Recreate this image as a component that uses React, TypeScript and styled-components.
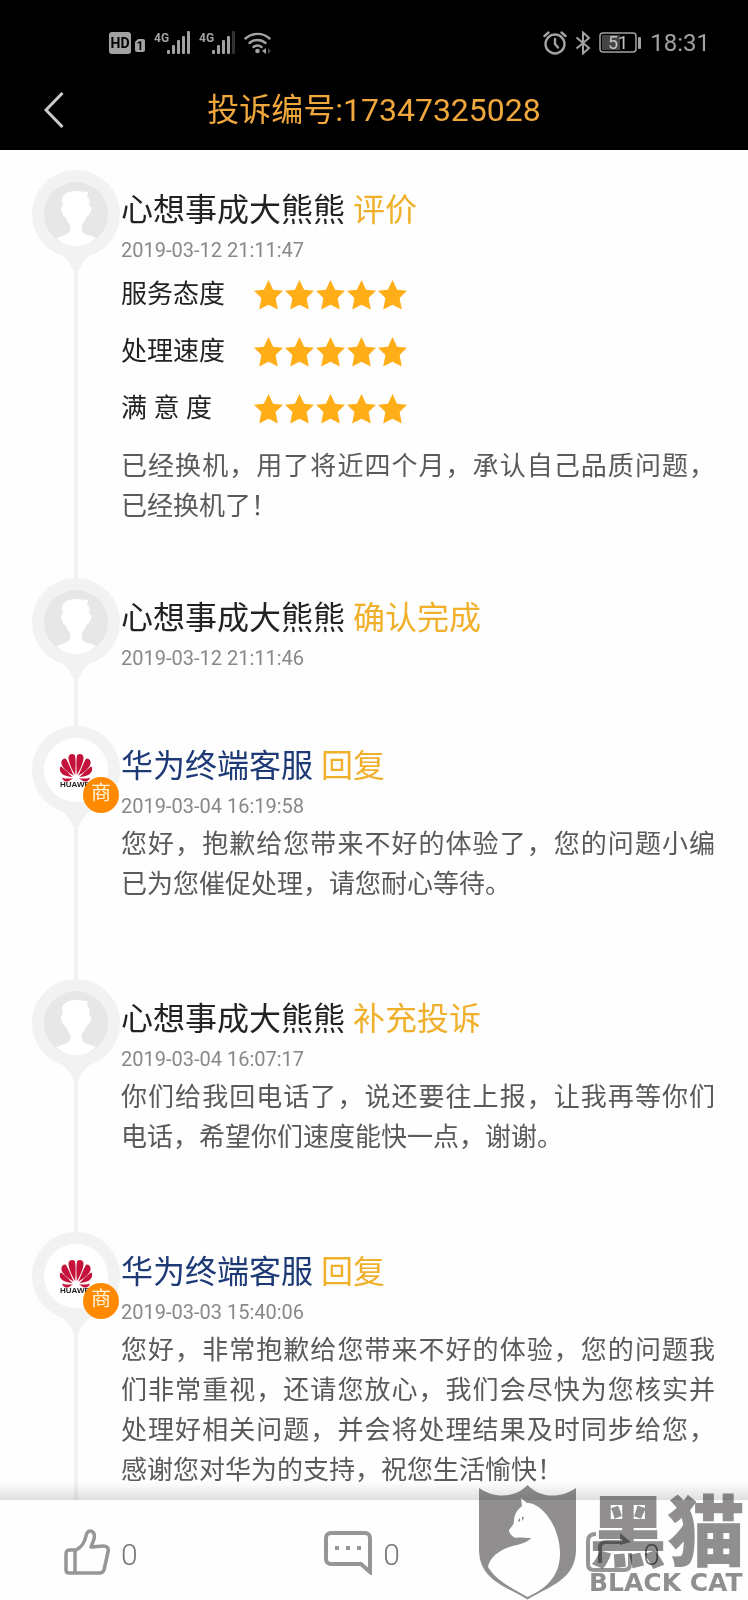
import styled, { createGlobalStyle } from "styled-components";

const GlobalStyle = createGlobalStyle`
    * {
        box-sizing: border-box;
    }
    body {
        margin: 0;
        background-color: #fefefe;
        font-family: Roboto, "Noto Sans CJK SC", sans-serif;
    }
    h1, h2, p, ol, dl, dd {
        margin: 0;
        padding: 0;
        font-weight: 400;
    }
    button {
        border: 0;
        padding: 0;
        background: none;
        font: inherit;
        color: inherit;
        cursor: pointer;
    }
`;

const Wrapper = styled.div`
    height: 100vh;
    display: flex;
    flex-direction: column;
    overflow: hidden;
`;

const Header = styled.header`
    background-color: #000;
`;

const StatusBar = styled.div`
    display: flex;
    align-items: center;
    justify-content: space-between;
    height: 70px;
    padding: 16px 38px 0 109px;
    color: #a2a2a2;
`;

const StatusGroup = styled.div`
    display: flex;
    align-items: center;
    gap: 8px;
`;

const Clock = styled.time`
    font-size: 24px;
    line-height: 28px;
`;

const NavBar = styled.div`
    display: grid;
    grid-template-columns: 80px 1fr 80px;
    align-items: center;
    height: 80px;
`;

const BackButton = styled.button`
    display: flex;
    justify-content: flex-end;
    height: 80px;
    padding-right: 16px;
    align-items: center;
`;

const PageTitle = styled.h1`
    font-size: 32px;
    line-height: 48px;
    text-align: center;
    color: #f0a83c;
`;

const Main = styled.main`
    flex: 1;
    min-height: 0;
    overflow-y: auto;
    scrollbar-width: none;
`;

const Timeline = styled.ol`
    list-style: none;
    padding: 20px 33px 0 32px;
`;

const Entry = styled.li`
    display: grid;
    grid-template-columns: 88px 1fr;
    column-gap: 1px;
`;

const Track = styled.div`
    display: flex;
    flex-direction: column;
    align-items: center;
    svg {
        display: block;
    }
`;

const PinBox = styled.div`
    position: relative;
`;

const TrackLine = styled.div`
    flex: 1;
    width: 4px;
    background-color: #f1f1f1;
`;

const MerchantBadge = styled.span`
    position: absolute;
    top: 51px;
    right: 1px;
    width: 36px;
    height: 36px;
    border-radius: 50%;
    background-color: #ff8a00;
    color: #fff5dc;
    font-size: 20px;
    line-height: 32px;
    text-align: center;
`;

const Content = styled.div`
    padding: 16px 0 52px;
`;

const EntryTitle = styled.h2`
    font-size: 32px;
    line-height: 48px;
`;

const Author = styled.span<{ $merchant: boolean }>`
    color: ${(props) => (props.$merchant ? "#1d3a76" : "#222")};
`;

const Action = styled.span`
    color: #f0b02c;
`;

const Posted = styled.time`
    display: block;
    font-size: 20px;
    line-height: 32px;
    color: #888;
`;

const Ratings = styled.dl`
    padding-bottom: 7px;
`;

const RatingRow = styled.div`
    display: grid;
    grid-template-columns: 133px auto;
    align-items: center;
    height: 57px;
    font-size: 26px;
    color: #222;
`;

const RatingLabel = styled.dt`
    padding-bottom: 2px;
    line-height: 36px;
`;

const Stars = styled.dd`
    display: flex;
    gap: 2px;
`;

const Message = styled.p<{ $spaced: boolean }>`
    margin-bottom: ${(props) => (props.$spaced ? 23 : 0)}px;
    padding-top: 2px;
    font-size: 26px;
    line-height: 40px;
    text-align: justify;
    color: #5a5a5a;
`;

const Footer = styled.footer`
    position: relative;
    height: 100px;
    background-color: #fefefe;
    &::before {
        content: "";
        position: absolute;
        left: 0;
        right: 0;
        bottom: 100%;
        height: 18px;
        background: linear-gradient(rgba(0, 0, 0, 0), rgba(0, 0, 0, 0.12));
    }
`;

const Actions = styled.div`
    display: flex;
    justify-content: space-between;
    padding: 24px 88px 0 64px;
`;

const ActionButton = styled.button`
    display: flex;
    align-items: center;
    gap: 11px;
    color: #969696;
    font-size: 30px;
    font-weight: 300;
    line-height: 50px;
`;

const Count = styled.span`
    padding-top: 6px;
    color: #777;
`;

const Watermark = styled.div`
    position: absolute;
    right: 0;
    bottom: 0;
    display: flex;
    gap: 13px;
    color: #918f90;
    mix-blend-mode: multiply;
    pointer-events: none;
`;

const WatermarkText = styled.div`
    display: flex;
    flex-direction: column;
    width: 159px;
    white-space: nowrap;
`;

const WatermarkName = styled.span`
    font-family: "Noto Sans CJK SC", sans-serif;
    font-size: 78px;
    font-weight: 900;
    line-height: 84px;
`;

const WatermarkLatin = styled.span`
    font-family: "DejaVu Sans", sans-serif;
    font-size: 25px;
    font-weight: 700;
    line-height: 28px;
`;

interface IEntry {
    id: number;
    author: string;
    merchant: boolean;
    action: string;
    time: string;
    ratings?: { label: string; score: number }[];
    message?: string;
}

const entries: IEntry[] = [
    {
        id: 5,
        author: "心想事成大熊熊",
        merchant: false,
        action: "评价",
        time: "2019-03-12 21:11:47",
        ratings: [
            { label: "服务态度", score: 5 },
            { label: "处理速度", score: 5 },
            { label: "满 意 度", score: 5 },
        ],
        message: "已经换机，用了将近四个月，承认自己品质问题，已经换机了！",
    },
    {
        id: 4,
        author: "心想事成大熊熊",
        merchant: false,
        action: "确认完成",
        time: "2019-03-12 21:11:46",
    },
    {
        id: 3,
        author: "华为终端客服",
        merchant: true,
        action: "回复",
        time: "2019-03-04 16:19:58",
        message:
            "您好，抱歉给您带来不好的体验了，您的问题小编已为您催促处理，请您耐心等待。",
    },
    {
        id: 2,
        author: "心想事成大熊熊",
        merchant: false,
        action: "补充投诉",
        time: "2019-03-04 16:07:17",
        message:
            "你们给我回电话了，说还要往上报，让我再等你们电话，希望你们速度能快一点，谢谢。",
    },
    {
        id: 1,
        author: "华为终端客服",
        merchant: true,
        action: "回复",
        time: "2019-03-03 15:40:06",
        message:
            "您好，非常抱歉给您带来不好的体验，您的问题我们非常重视，还请您放心，我们会尽快为您核实并处理好相关问题，并会将处理结果及时同步给您，感谢您对华为的支持，祝您生活愉快！",
    },
];

function HdIcon() {
    return (
        <svg width="37" height="24" viewBox="0 0 37 24">
            <rect x="0" y="1" width="22" height="22" rx="3" fill="currentColor" />
            <text
                x="11"
                y="17"
                fontSize="14"
                fontWeight="700"
                textAnchor="middle"
                fill="#000"
            >
                HD
            </text>
            <path
                d="M29 8h5a2 2 0 0 1 2 2v9a2 2 0 0 1-2 2h-6a2 2 0 0 1-2-2v-8z"
                fill="currentColor"
            />
            <text
                x="31"
                y="19"
                fontSize="12"
                fontWeight="700"
                textAnchor="middle"
                fill="#000"
            >
                1
            </text>
        </svg>
    );
}

function SignalIcon({ bars }: { bars: number }) {
    return (
        <svg width="37" height="24" viewBox="0 0 37 24">
            <text
                x="0"
                y="11"
                fontSize="12"
                fontWeight="700"
                fill="currentColor"
            >
                4G
            </text>
            {[4, 9, 14, 18, 23].map((height, i) => (
                <rect
                    key={height}
                    x={13 + i * 5}
                    y={23 - height}
                    width="3"
                    height={height}
                    rx="1"
                    fill={i < bars ? "currentColor" : "#333"}
                />
            ))}
        </svg>
    );
}

function WifiIcon() {
    return (
        <svg width="28" height="24" viewBox="0 0 28 24" fill="none">
            <g stroke="currentColor" strokeWidth="2.4" strokeLinecap="round">
                <path d="M1.5 7.5a18 18 0 0 1 24 0" />
                <path d="M5.5 12a12 12 0 0 1 16 0" />
                <path d="M9.5 16a6.5 6.5 0 0 1 8 0" />
            </g>
            <circle cx="13.5" cy="20" r="2.3" fill="currentColor" />
            <path d="M22 17v6l-4-3z" fill="currentColor" />
            <path d="M24 17v6l3-3z" fill="#444" />
        </svg>
    );
}

function AlarmIcon() {
    return (
        <svg
            width="24"
            height="24"
            viewBox="0 0 24 24"
            fill="none"
            stroke="currentColor"
            strokeWidth="2.4"
            strokeLinecap="round"
        >
            <circle cx="12" cy="13" r="9.5" />
            <path d="M12 8v5l3 3.5M1.5 5l4-3.5M22.5 5l-4-3.5" />
        </svg>
    );
}

function BluetoothIcon() {
    return (
        <svg
            width="16"
            height="24"
            viewBox="0 0 16 24"
            fill="none"
            stroke="currentColor"
            strokeWidth="2"
        >
            <path d="M1.5 6.5L14 17l-6 5.5v-21L14 7 1.5 17.5" />
        </svg>
    );
}

function BatteryIcon() {
    return (
        <svg width="43" height="22" viewBox="0 0 43 22">
            <rect
                x="1"
                y="1"
                width="36"
                height="19"
                rx="3"
                fill="none"
                stroke="currentColor"
                strokeWidth="1.5"
            />
            <rect x="3" y="3" width="18" height="15" fill="#444" />
            <text
                x="19"
                y="17"
                fontSize="18"
                textAnchor="middle"
                fill="#c4c4c4"
            >
                51
            </text>
            <rect x="39" y="5" width="3" height="12" rx="1" fill="currentColor" />
        </svg>
    );
}

function StarIcon() {
    return (
        <svg width="29" height="30" viewBox="0 0 29 30">
            <path
                d="M14.5 0l4.6 9.8 9.9 1-7.4 7.2 2.2 11.4-9.3-4.6-9.3 4.6 2.2-11.4L0 10.800l9.900-1z"
                fill="#ffae18"
            />
        </svg>
    );
}

function Pin({ merchant }: { merchant: boolean }) {
    return (
        <svg width="88" height="106" viewBox="0 0 88 106">
            <path d="M29 84c6 5 10 11 13 18v4h4v-4c3-7 7-13 13-18z" fill="#f2f2f2" />
            <circle cx="44" cy="44" r="44" fill="#f2f2f2" />
            {merchant ? (
                <>
                    <circle cx="44" cy="44" r="32" fill="#fff" />
                    <g fill="#c4123a">
                        {/* each petal is mirrored around the logo's middle */}
                        {[1, -1].map((side) => (
                            <g
                                key={side}
                                transform={`translate(44 0) scale(${side} 1)`}
                            >
                                <path d="M.8 49C.2 40 .2 32 1.2 29c3-2 6.500-.5 6.300 3C7.300 37 4 44 .8 49z" />
                                <path d="M2.200 49.800C5 44 8.500 34 10.500 32.500c3.500 0 4.800 3 3.800 6C13 43 6 47.500 2.200 49.800z" />
                                <path d="M3.500 51C7 48 12.500 41.500 15.500 40.500c1.500 3 .2 6-2.500 8-2.500 1.600-6.500 2.300-9.500 2.500z" />
                                <path d="M3 52.400c4 .3 9 .1 11-.7-1.200 3.500-4.500 4.500-6.500 3.500z" />
                            </g>
                        ))}
                    </g>
                    <text
                        x="44"
                        y="61"
                        fontFamily="Liberation Sans, sans-serif"
                        fontSize="8"
                        fontWeight="700"
                        textAnchor="middle"
                        fill="#222"
                    >
                        HUAWEI
                    </text>
                </>
            ) : (
                <>
                    <circle cx="44" cy="44" r="32" fill="#e7e7e7" />
                    <path
                        d="M30 30c0-5 6-9 13-9 5 0 8 1 13 1l-1 4c3 3 3 6 2 10 3 0 3 4 1 7-1 3-3 3-4 5-1 3-3 5-4 7-1 5 0 8 5 10 4 1 7 2 9 3-5 5-12 8-20 8s-15-3-20-8c3-1 6-2 9-3 5-2 6-5 5-10-2-2-3-4-4-7-2-2-3-2-4-5-1-4-2-7 1-7 0-3-1-4-1-6z"
                        fill="#fff"
                    />
                </>
            )}
        </svg>
    );
}

function LikeIcon() {
    return (
        <svg
            width="46"
            height="46"
            viewBox="0 0 46 46"
            fill="none"
            stroke="currentColor"
            strokeWidth="3.5"
            strokeLinejoin="round"
        >
            <path d="M12 21c6-3 9-9 10-14 1-4 2-5 4-5 4 0 5 4 4 8l-3 8c3 0 9-1 12-1 4 0 6 2 5 6l-4 18c-1 2-2 3-4 3H5c-2 0-3-1-3-3V25c0-3 1-4 4-4z" />
            <path d="M11 21v23" />
        </svg>
    );
}

function CommentIcon() {
    return (
        <svg
            width="48"
            height="46"
            viewBox="0 0 48 46"
            fill="none"
            stroke="currentColor"
            strokeWidth="4"
        >
            <path d="M7 4h34c3 0 5 2 5 5v34l-9-8H7c-3 0-5-2-5-5V9c0-3 2-5 5-5z" />
            <path d="M11 19h4M22 19h4M33 19h4" />
        </svg>
    );
}

function ShareIcon() {
    return (
        <svg
            width="46"
            height="46"
            viewBox="0 0 46 46"
            fill="none"
            stroke="currentColor"
            strokeWidth="4"
        >
            <path d="M10 5C5 5 2 7 2 12v23c0 4 2 6 6 6h30c4 0 6-2 6-6V24" />
            <path d="M14 34V19c0-4 2-6 6-6h18" />
            <path d="M34 4l11 9-11 3z" fill="currentColor" stroke="none" />
        </svg>
    );
}

function ShieldLogo() {
    return (
        <svg width="97" height="115" viewBox="0 0 97 115">
            <path
                d="M0 3c16 11 36 10 48.500-3C61 13 81 14 97 3v61c0 30-24 36-48.500 50.500C24 100 0 94 0 64z"
                fill="currentColor"
            />
            <path
                d="M42 13l6 5c2 0 4 0 6 1 18 8 27 32 27 49 0 20-10 34-32.500 44C30 102 16 94 9 82c2-11 14-19 29-22 7-2 12-4 14-7-6 0-11-1-15 0-4-1-7-5-7-8 2-3 5-5 5-9 0-7 4-12 8-15z"
                fill="#fff"
            />
            <path d="M39 36c1-4 4-5 6-4-1 4-3 6-6 4z" fill="currentColor" />
            <path d="M42 32v5" stroke="#fff" strokeWidth="2" />
        </svg>
    );
}

function App() {
    return (
        <Wrapper lang="zh-CN">
            <GlobalStyle />
            <Header>
                <StatusBar>
                    <StatusGroup>
                        <HdIcon />
                        <SignalIcon bars={5} />
                        <SignalIcon bars={4} />
                        <WifiIcon />
                    </StatusGroup>
                    <StatusGroup>
                        <AlarmIcon />
                        <BluetoothIcon />
                        <BatteryIcon />
                        <Clock>18:31</Clock>
                    </StatusGroup>
                </StatusBar>
                <NavBar>
                    <BackButton aria-label="返回">
                        <svg width="20" height="36" viewBox="0 0 20 36">
                            <path
                                d="M18.5 1L2 18l16.5 17"
                                fill="none"
                                stroke="#ccc"
                                strokeWidth="3"
                            />
                        </svg>
                    </BackButton>
                    <PageTitle>投诉编号:17347325028</PageTitle>
                </NavBar>
            </Header>

            <Main>
                <Timeline>
                    {entries.map((entry) => (
                        <Entry key={entry.id}>
                            <Track>
                                <PinBox>
                                    <Pin merchant={entry.merchant} />
                                    {entry.merchant && (
                                        <MerchantBadge>商</MerchantBadge>
                                    )}
                                </PinBox>
                                <TrackLine />
                            </Track>
                            <Content>
                                <EntryTitle>
                                    <Author $merchant={entry.merchant}>
                                        {entry.author}
                                    </Author>{" "}
                                    <Action>{entry.action}</Action>
                                </EntryTitle>
                                <Posted>{entry.time}</Posted>
                                {entry.ratings && (
                                    <Ratings>
                                        {entry.ratings.map((rating) => (
                                            <RatingRow key={rating.label}>
                                                <RatingLabel>
                                                    {rating.label}
                                                </RatingLabel>
                                                <Stars>
                                                    {Array.from(
                                                        { length: rating.score },
                                                        (_, i) => (
                                                            <StarIcon key={i} />
                                                        )
                                                    )}
                                                </Stars>
                                            </RatingRow>
                                        ))}
                                    </Ratings>
                                )}
                                {entry.message && (
                                    <Message $spaced={!entry.ratings}>
                                        {entry.message}
                                    </Message>
                                )}
                            </Content>
                        </Entry>
                    ))}
                </Timeline>
            </Main>

            <Footer>
                <Actions>
                    <ActionButton aria-label="点赞">
                        <LikeIcon />
                        <Count>0</Count>
                    </ActionButton>
                    <ActionButton aria-label="评论">
                        <CommentIcon />
                        <Count>0</Count>
                    </ActionButton>
                    <ActionButton aria-label="分享">
                        <ShareIcon />
                        <Count>0</Count>
                    </ActionButton>
                </Actions>
                <Watermark>
                    <ShieldLogo />
                    <WatermarkText>
                        <WatermarkName>黑猫</WatermarkName>
                        <WatermarkLatin>BLACK CAT</WatermarkLatin>
                    </WatermarkText>
                </Watermark>
            </Footer>
        </Wrapper>
    );
}

export default App;
